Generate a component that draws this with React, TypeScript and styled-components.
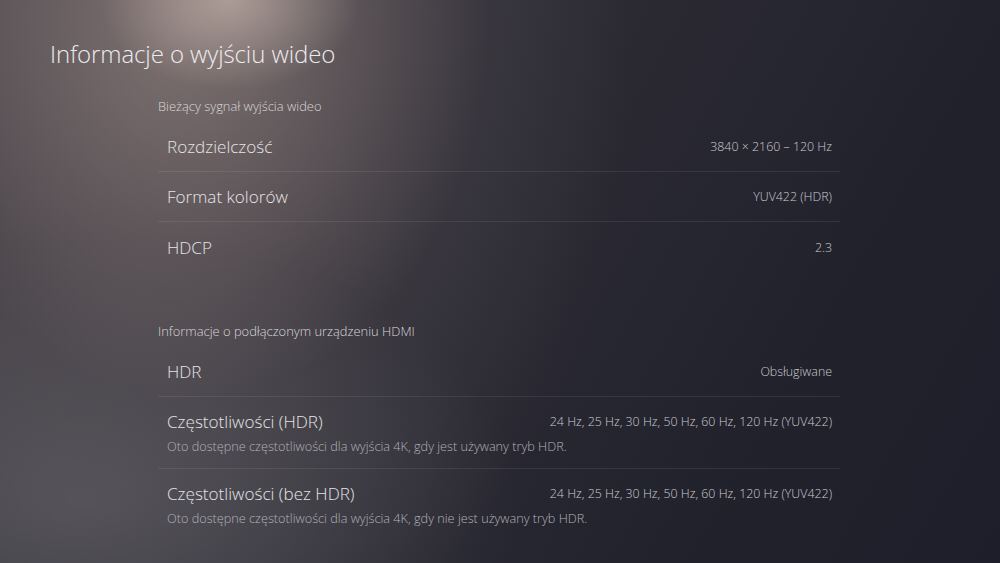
import React from "react";
import styled, { createGlobalStyle } from "styled-components";

const GlobalStyle = createGlobalStyle`
  html, body {
    margin: 0;
    padding: 0;
    background: #22222d;
    overflow: hidden;
  }
  * {
    box-sizing: border-box;
  }
`;

const Screen = styled.div`
  width: 1000px;
  height: 563px;
  position: relative;
  overflow: hidden;
  font-family: "Open Sans", "Noto Sans", sans-serif;
  color: #e2e2e4;
  background:
    radial-gradient(ellipse 130px 90px at 230px 0px, rgba(210, 190, 180, 0.6), rgba(210, 190, 180, 0) 100%),
    radial-gradient(ellipse 300px 380px at 190px 20px, rgba(175, 155, 148, 0.45), rgba(175, 155, 148, 0) 100%),
    radial-gradient(ellipse 480px 640px at 150px 60px, rgba(120, 108, 110, 0.45), rgba(120, 108, 110, 0) 100%),
    radial-gradient(ellipse 440px 260px at 80px 500px, rgba(100, 100, 106, 0.6), rgba(100, 100, 106, 0) 100%),
    linear-gradient(120deg, #3e3b42 0%, #2c2b34 45%, #22222d 75%, #1e1e2a 100%);
  padding: 39px 0 0 50px;
`;

const Title = styled.h1`
  margin: 0;
  font-size: 24px;
  line-height: 30px;
  font-weight: 300;
  color: #ececee;
  letter-spacing: -0.1px;
`;

const Content = styled.div`
  margin-left: 108px;
  width: 682px;
  padding-top: 29px;
  display: flex;
  flex-direction: column;
  gap: 51px;
`;

const Section = styled.section`
  display: flex;
  flex-direction: column;
`;

const SectionHeader = styled.div`
  font-size: 12.9px;
  line-height: 16px;
  font-weight: 300;
  color: #d8d6d8;
  margin-bottom: 8px;
`;

const Row = styled.div<{ $last?: boolean; $tall?: boolean }>`
  display: flex;
  flex-direction: column;
  justify-content: center;
  gap: 5px;
  padding: ${(p) => (p.$tall ? "13px 8px 13px 9px" : "0 8px 0 9px")};
  min-height: 50px;
  border-bottom: ${(p) => (p.$last ? "none" : "1px solid rgba(255, 255, 255, 0.08)")};
`;

const RowMain = styled.div`
  display: flex;
  align-items: center;
  justify-content: space-between;
  height: 22px;
`;

const Label = styled.span`
  font-size: 17.1px;
  font-weight: 300;
  color: #e4e4e6;
`;

const Value = styled.span`
  font-size: 12.4px;
  font-weight: 300;
  color: #cacad0;
`;

const Description = styled.div`
  font-size: 12.7px;
  line-height: 18px;
  font-weight: 300;
  color: #b0b0b6;
`;

type Item = { label: string; value: string; description?: string };

const signal: Item[] = [
  { label: "Rozdzielczość", value: "3840 × 2160 – 120 Hz" },
  { label: "Format kolorów", value: "YUV422 (HDR)" },
  { label: "HDCP", value: "2.3" },
];

const device: Item[] = [
  { label: "HDR", value: "Obsługiwane" },
  {
    label: "Częstotliwości (HDR)",
    value: "24 Hz, 25 Hz, 30 Hz, 50 Hz, 60 Hz, 120 Hz (YUV422)",
    description: "Oto dostępne częstotliwości dla wyjścia 4K, gdy jest używany tryb HDR.",
  },
  {
    label: "Częstotliwości (bez HDR)",
    value: "24 Hz, 25 Hz, 30 Hz, 50 Hz, 60 Hz, 120 Hz (YUV422)",
    description: "Oto dostępne częstotliwości dla wyjścia 4K, gdy nie jest używany tryb HDR.",
  },
];

const InfoList = ({ title, items }: { title: string; items: Item[] }) => (
  <Section>
    <SectionHeader>{title}</SectionHeader>
    {items.map((item, i) => (
      <Row key={item.label} $last={i === items.length - 1} $tall={!!item.description}>
        <RowMain>
          <Label>{item.label}</Label>
          <Value>{item.value}</Value>
        </RowMain>
        {item.description && <Description>{item.description}</Description>}
      </Row>
    ))}
  </Section>
);

const App = () => {
  return (
    <>
      <GlobalStyle />
      <Screen>
        <Title>Informacje o wyjściu wideo</Title>
        <Content>
          <InfoList title="Bieżący sygnał wyjścia wideo" items={signal} />
          <InfoList title="Informacje o podłączonym urządzeniu HDMI" items={device} />
        </Content>
      </Screen>
    </>
  );
};

export default App;
